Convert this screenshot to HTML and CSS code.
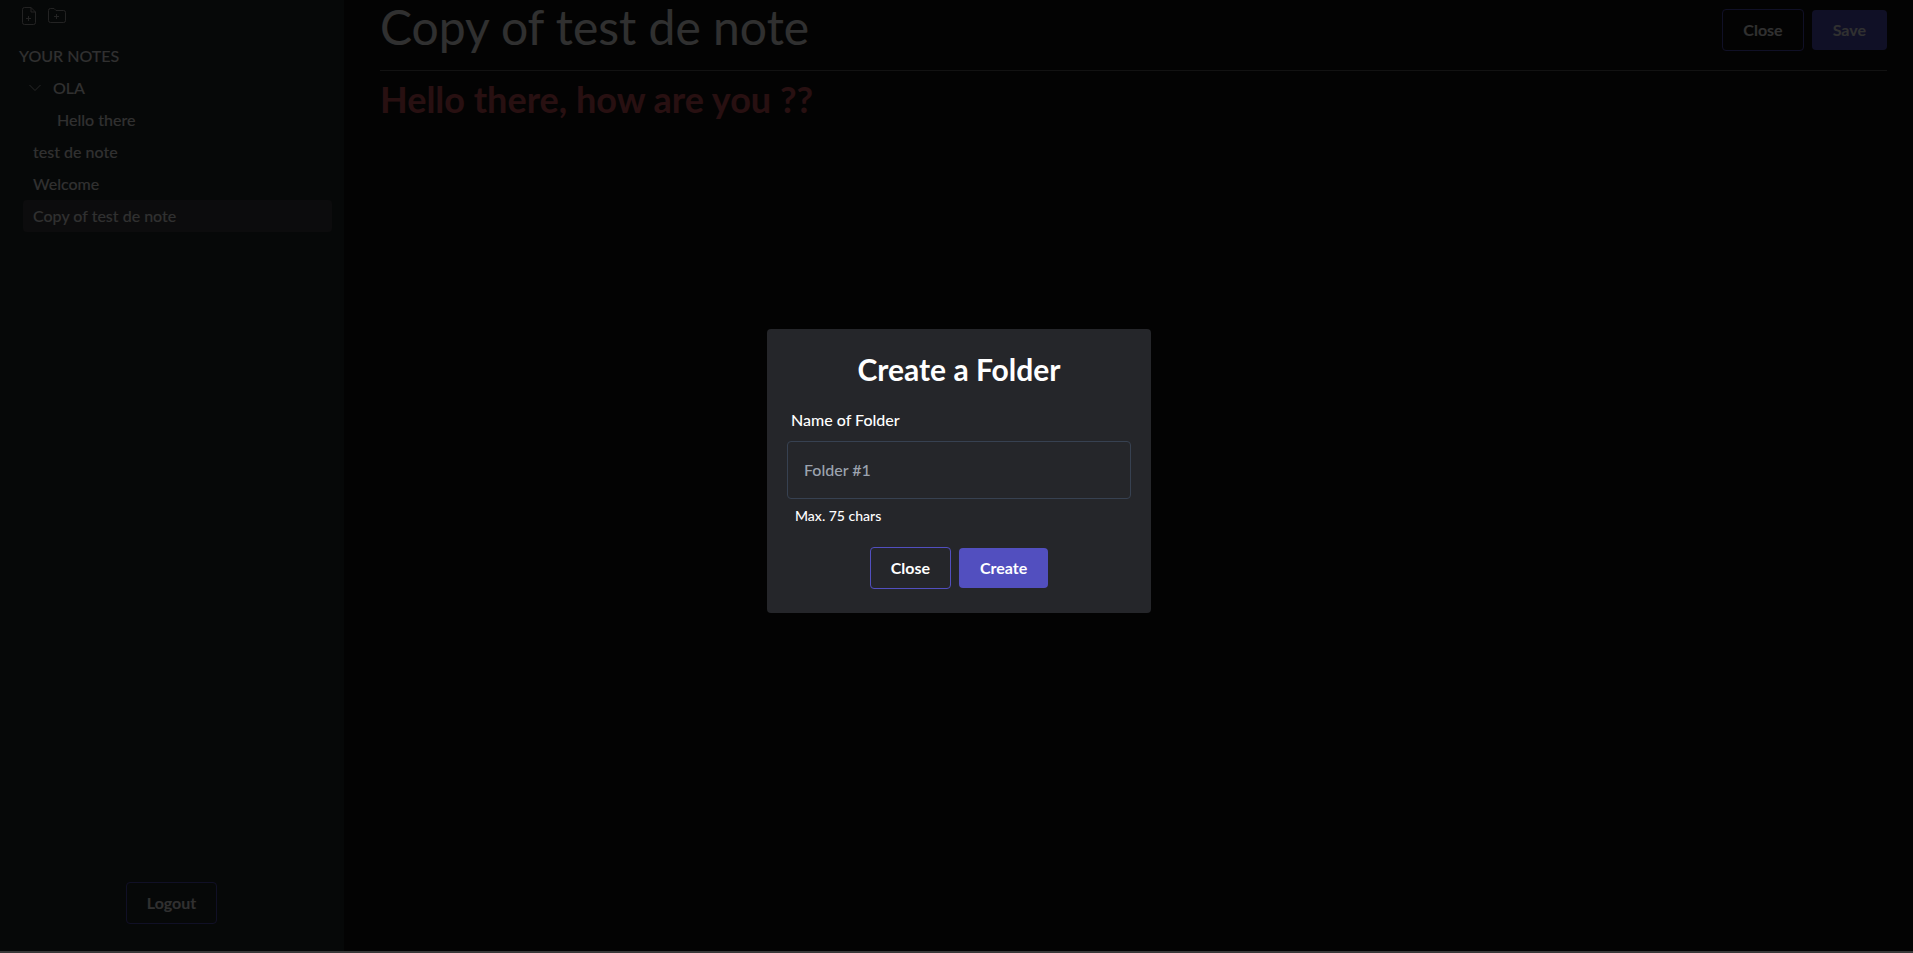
FILE: index.html
```html
<!DOCTYPE html>
<html lang="en">
<head>
<meta charset="utf-8">
<title>Notes</title>
<link rel="stylesheet" href="styles.css">
</head>
<body>
<div class="app">
  <aside class="sidebar">
    <div class="tools">
      <button class="icon-button" type="button" aria-label="New note">
        <svg width="20" height="20" viewBox="0 0 20 20"><path d="M12 1.500H5.500a2 2 0 0 0-2 2v13a2 2 0 0 0 2 2h9a2 2 0 0 0 2-2V6zM12 1.500V6h4.500M9.500 10v5M7 12.500h5"/></svg>
      </button>
      <button class="icon-button" type="button" aria-label="New folder">
        <svg width="20" height="20" viewBox="0 0 20 20"><path d="M1.500 4.500a2 2 0 0 1 2-2h3.500l2 2h7.500a2 2 0 0 1 2 2v8a2 2 0 0 1-2 2h-13a2 2 0 0 1-2-2zM9.500 8v5M7 10.500h5"/></svg>
      </button>
    </div>
    <h2 class="notes-heading">YOUR NOTES</h2>
    <nav class="notes" aria-label="Your notes">
      <button class="folder" type="button" aria-expanded="true">
        <svg width="12" height="8" viewBox="0 0 12 8"><path d="M.5 1 6 6.500 11.500 1"/></svg>
        OLA
      </button>
      <a class="note nested" href="#hello">Hello there</a>
      <a class="note" href="#test">test de note</a>
      <a class="note" href="#welcome">Welcome</a>
      <a class="note selected" href="#copy" aria-current="page">Copy of test de note</a>
    </nav>
    <div class="sidebar-footer">
      <button class="button outline" type="button">Logout</button>
    </div>
  </aside>
  <main class="editor">
    <header class="editor-header">
      <h1 class="note-title">Copy of test de note</h1>
      <div class="actions">
        <button class="button outline" type="button">Close</button>
        <button class="button filled" type="button">Save</button>
      </div>
    </header>
    <h2 class="note-body">Hello there, how are you ??</h2>
  </main>
</div>
<div class="overlay">
  <form class="dialog" role="dialog" aria-modal="true" aria-labelledby="dialog-title">
    <h2 class="dialog-title" id="dialog-title">Create a Folder</h2>
    <label class="field-label" for="folder-name">Name of Folder</label>
    <input class="field" id="folder-name" type="text" maxlength="75" placeholder="Folder #1" aria-describedby="folder-hint">
    <p class="hint" id="folder-hint">Max. 75 chars</p>
    <div class="actions centered">
      <button class="button outline" type="button">Close</button>
      <button class="button filled" type="submit">Create</button>
    </div>
  </form>
</div>
</body>
</html>
```
FILE: styles.css
```css
* { box-sizing: border-box; }

body {
  margin: 0;
  background: #121212;
  color: #f0f0f0;
  font: 500 16px/24px Lato, "Liberation Sans", sans-serif;
}

h1, h2, p { margin: 0; }

button, input { font: inherit; color: inherit; }

svg {
  fill: none;
  stroke: currentColor;
  stroke-width: 1;
}

.app {
  display: flex;
  min-height: 100vh;
}

.sidebar {
  display: flex;
  flex-direction: column;
  width: 344px;
  padding: 6px 12px 29px 19px;
  background: #202828;
}

.tools {
  display: flex;
  gap: 8px;
  height: 38px;
}

.icon-button {
  width: 20px;
  height: 20px;
  padding: 0;
  border: 0;
  background: none;
  color: #b0b0b0;
}

.icon-button svg { display: block; }

.notes-heading {
  font-size: 16px;
  line-height: 24px;
  font-weight: 500;
}

.notes {
  display: flex;
  flex-direction: column;
  padding: 4px 0 0 4px;
}

.folder {
  display: flex;
  align-items: center;
  gap: 12px;
  height: 32px;
  padding: 0 6px;
  border: 0;
  background: none;
}

.folder svg { color: #c0c0c0; }

.note {
  padding: 4px 10px;
  border-radius: 4px;
  color: inherit;
  text-decoration: none;
}

.nested { padding-left: 34px; }

.selected { background: #3c3c40; }

.sidebar-footer {
  display: flex;
  justify-content: center;
  margin-top: auto;
  padding-right: 8px;
}

.editor {
  flex: 1;
  padding: 0 26px 0 36px;
}

.editor-header {
  display: flex;
  justify-content: space-between;
  align-items: flex-start;
  padding-bottom: 16px;
  border-bottom: 1px solid #5c5c5c;
}

.note-title {
  font-size: 48px;
  line-height: 54px;
  font-weight: 400;
}

.note-body {
  padding-top: 6px;
  color: #c85058;
  font-size: 36px;
  line-height: 44px;
  font-weight: 700;
}

.actions {
  display: flex;
  align-items: center;
  gap: 8px;
  padding-top: 9px;
}

.button {
  padding: 8px 21px;
  border: 0;
  border-radius: 4px;
  background: none;
  font-weight: 700;
}

.outline {
  padding: 8px 20px;
  border: 1px solid #524fbf;
}

.filled { background: #524fbf; }

.overlay {
  position: fixed;
  inset: 0;
  display: flex;
  align-items: center;
  justify-content: center;
  padding: 0 0 10px 5px;
  border-bottom: 2px solid #383838;
  background: rgba(0, 0, 0, 0.8);
}

.dialog {
  display: flex;
  flex-direction: column;
  width: 384px;
  padding: 20px 20px 24px;
  border-radius: 4px;
  background: #25262a;
  color: #fff;
}

.dialog-title {
  font-size: 30px;
  line-height: 40px;
  font-weight: 700;
  text-align: center;
}

.field-label { padding: 19px 4px 9px; }

.field {
  width: 100%;
  height: 58px;
  padding: 0 16px;
  border: 1px solid #374151;
  border-radius: 4px;
  background: transparent;
}

.field::placeholder { color: #9ca3af; opacity: 1; }

.hint {
  padding: 7px 8px 13px;
  font-size: 14px;
  line-height: 20px;
}

.centered {
  justify-content: center;
  padding-top: 8px;
}
```
